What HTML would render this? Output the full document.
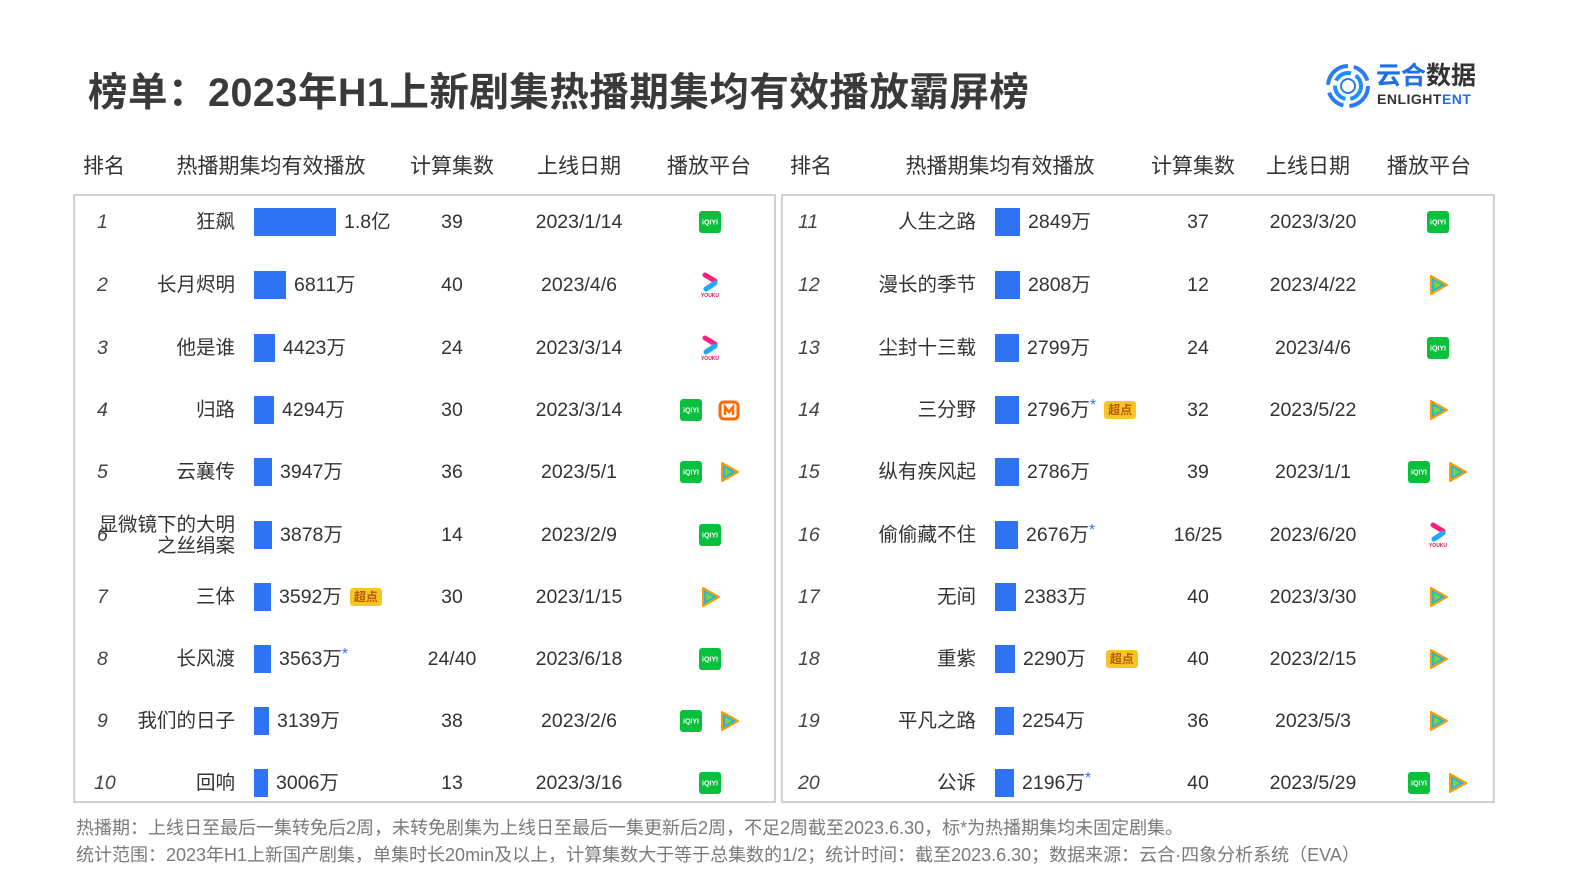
<!DOCTYPE html>
<html><head><meta charset="utf-8"><style>
*{margin:0;padding:0;box-sizing:border-box}
body{width:1587px;height:892px;background:#fff;position:relative;overflow:hidden;font-family:"Liberation Sans","Noto Sans CJK SC",sans-serif;color:#333}
.a{position:absolute;white-space:nowrap}
.title{left:88px;top:61px;font-size:39.5px;font-weight:bold;color:#3a3a3a;letter-spacing:0.5px}
.h{top:150px;font-size:21px;color:#333;text-align:center;width:200px;margin-left:-100px}
.box{border:2px solid #d0d0d0;top:194px;height:609px}
.r{position:absolute;height:30px;left:0;width:1587px}
.r span{position:absolute;top:0;line-height:30px;font-size:19.5px;white-space:nowrap}
.rk{font-style:italic;color:#444}
.nm{text-align:right;width:160px}
.bv{display:flex;align-items:center}
.bv i{display:inline-block;height:28px;background:#2f73f5;margin-right:8px}
.c{text-align:center;width:140px;margin-left:-70px}
.cd{display:inline-block;background:#f7c52a;color:#b35a00;font-size:12px;line-height:18px;padding:0 4px;border-radius:3px;margin-left:8px;font-weight:bold;font-style:normal}
sup{color:#2f73f5;font-size:16px;position:relative;top:-4px}
.pf{display:flex;gap:16px;align-items:center;justify-content:center;width:120px;margin-left:-60px;height:30px}
.ft{left:76px;font-size:18px;color:#7a7a7a}
</style></head><body>
<svg width="0" height="0" style="position:absolute"><defs>
<symbol id="iq" viewBox="0 0 22 22"><rect width="22" height="22" rx="3" fill="#08c03c"/><text x="11" y="13.5" font-size="7" fill="#fff" text-anchor="middle" font-family="Liberation Sans" font-weight="bold">iQIYI</text></symbol>
<symbol id="tx" viewBox="0 0 22 22"><path d="M4 2 L20 11 L4 20 Z" fill="#ff9a00" stroke="#ff9a00" stroke-width="2" stroke-linejoin="round"/><path d="M5 4 L18 11 L5 18 Z" fill="#1fb7ea"/><path d="M7 7 L14 11 L7 15 Z" fill="#7ad63a"/></symbol>
<symbol id="yk" viewBox="0 0 22 26"><path d="M6 3 L16 9" stroke="#ff1f7a" stroke-width="5" stroke-linecap="round"/><path d="M16 11 L7 17" stroke="#21a9f5" stroke-width="5" stroke-linecap="round"/><text x="11" y="25" font-size="5" fill="#e0105a" text-anchor="middle" font-family="Liberation Sans" font-weight="bold">YOUKU</text></symbol>
<symbol id="mg" viewBox="0 0 22 22"><rect x="2" y="3" width="18" height="17" rx="4" fill="none" stroke="#ff6a00" stroke-width="3"/><path d="M7 16 V8 L11 13 L15 8 V16" fill="none" stroke="#ff6a00" stroke-width="2.5"/></symbol>
</defs></svg>

<div class="a title">榜单：2023年H1上新剧集热播期集均有效播放霸屏榜</div>

<div class="a" style="left:1324px;top:62px;">
<svg width="48" height="48" viewBox="0 0 48 48"><circle cx="24" cy="24" r="20" fill="none" stroke="#2a7bf0" stroke-width="4" stroke-dasharray="30 6 20 8"/><circle cx="24" cy="24" r="13" fill="none" stroke="#1d8fff" stroke-width="4" stroke-dasharray="18 5"/><circle cx="24" cy="24" r="7" fill="none" stroke="#2a7bf0" stroke-width="2"/></svg>
</div>
<div class="a" style="left:1376px;top:62px;font-size:25px;font-weight:bold;color:#1f6fe8;line-height:28px">云合<span style="color:#333">数据</span></div>
<div class="a" style="left:1377px;top:91px;font-size:14px;font-weight:bold;color:#333;letter-spacing:0.5px">ENLIGH<span>T</span><span style="color:#1f6fe8">ENT</span></div>

<div class="a h" style="left:104px">排名</div>
<div class="a h" style="left:271px">热播期集均有效播放</div>
<div class="a h" style="left:452px">计算集数</div>
<div class="a h" style="left:579px">上线日期</div>
<div class="a h" style="left:709px">播放平台</div>
<div class="a h" style="left:811px">排名</div>
<div class="a h" style="left:1000px">热播期集均有效播放</div>
<div class="a h" style="left:1193px">计算集数</div>
<div class="a h" style="left:1308px">上线日期</div>
<div class="a h" style="left:1429px">播放平台</div>

<div class="a box" style="left:73px;width:703px"></div>
<div class="a box" style="left:781px;width:714px"></div>

<!-- left rows -->
<div class="r" style="top:207px"><span class="rk" style="left:97px">1</span><span class="nm" style="left:75px">狂飙</span><span class="bv" style="left:254px"><i style="width:82px"></i>1.8亿</span><span class="c" style="left:452px">39</span><span class="c" style="left:579px">2023/1/14</span><span class="pf" style="left:710px"><svg width="22" height="22"><use href="#iq"/></svg></span></div>
<div class="r" style="top:270px"><span class="rk" style="left:97px">2</span><span class="nm" style="left:75px">长月烬明</span><span class="bv" style="left:254px"><i style="width:32px"></i>6811万</span><span class="c" style="left:452px">40</span><span class="c" style="left:579px">2023/4/6</span><span class="pf" style="left:710px"><svg width="22" height="26"><use href="#yk"/></svg></span></div>
<div class="r" style="top:333px"><span class="rk" style="left:97px">3</span><span class="nm" style="left:75px">他是谁</span><span class="bv" style="left:254px"><i style="width:21px"></i>4423万</span><span class="c" style="left:452px">24</span><span class="c" style="left:579px">2023/3/14</span><span class="pf" style="left:710px"><svg width="22" height="26"><use href="#yk"/></svg></span></div>
<div class="r" style="top:395px"><span class="rk" style="left:97px">4</span><span class="nm" style="left:75px">归路</span><span class="bv" style="left:254px"><i style="width:20px"></i>4294万</span><span class="c" style="left:452px">30</span><span class="c" style="left:579px">2023/3/14</span><span class="pf" style="left:710px"><svg width="22" height="22"><use href="#iq"/></svg><svg width="22" height="22"><use href="#mg"/></svg></span></div>
<div class="r" style="top:457px"><span class="rk" style="left:97px">5</span><span class="nm" style="left:75px">云襄传</span><span class="bv" style="left:254px"><i style="width:18px"></i>3947万</span><span class="c" style="left:452px">36</span><span class="c" style="left:579px">2023/5/1</span><span class="pf" style="left:710px"><svg width="22" height="22"><use href="#iq"/></svg><svg width="22" height="22"><use href="#tx"/></svg></span></div>
<div class="r" style="top:520px"><span class="rk" style="left:97px">6</span><span class="nm" style="left:75px;line-height:21px;top:-5px">显微镜下的大明<br>之丝绢案</span><span class="bv" style="left:254px"><i style="width:18px"></i>3878万</span><span class="c" style="left:452px">14</span><span class="c" style="left:579px">2023/2/9</span><span class="pf" style="left:710px"><svg width="22" height="22"><use href="#iq"/></svg></span></div>
<div class="r" style="top:582px"><span class="rk" style="left:97px">7</span><span class="nm" style="left:75px">三体</span><span class="bv" style="left:254px"><i style="width:17px"></i>3592万<b class="cd">超点</b></span><span class="c" style="left:452px">30</span><span class="c" style="left:579px">2023/1/15</span><span class="pf" style="left:710px"><svg width="22" height="22"><use href="#tx"/></svg></span></div>
<div class="r" style="top:644px"><span class="rk" style="left:97px">8</span><span class="nm" style="left:75px">长风渡</span><span class="bv" style="left:254px"><i style="width:17px"></i>3563万<sup>*</sup></span><span class="c" style="left:452px">24/40</span><span class="c" style="left:579px">2023/6/18</span><span class="pf" style="left:710px"><svg width="22" height="22"><use href="#iq"/></svg></span></div>
<div class="r" style="top:706px"><span class="rk" style="left:97px">9</span><span class="nm" style="left:75px">我们的日子</span><span class="bv" style="left:254px"><i style="width:15px"></i>3139万</span><span class="c" style="left:452px">38</span><span class="c" style="left:579px">2023/2/6</span><span class="pf" style="left:710px"><svg width="22" height="22"><use href="#iq"/></svg><svg width="22" height="22"><use href="#tx"/></svg></span></div>
<div class="r" style="top:768px"><span class="rk" style="left:94px">10</span><span class="nm" style="left:75px">回响</span><span class="bv" style="left:254px"><i style="width:14px"></i>3006万</span><span class="c" style="left:452px">13</span><span class="c" style="left:579px">2023/3/16</span><span class="pf" style="left:710px"><svg width="22" height="22"><use href="#iq"/></svg></span></div>

<!-- right rows -->
<div class="r" style="top:207px"><span class="rk" style="left:798px">11</span><span class="nm" style="left:816px">人生之路</span><span class="bv" style="left:995px"><i style="width:25px"></i>2849万</span><span class="c" style="left:1198px">37</span><span class="c" style="left:1313px">2023/3/20</span><span class="pf" style="left:1438px"><svg width="22" height="22"><use href="#iq"/></svg></span></div>
<div class="r" style="top:270px"><span class="rk" style="left:798px">12</span><span class="nm" style="left:816px">漫长的季节</span><span class="bv" style="left:995px"><i style="width:25px"></i>2808万</span><span class="c" style="left:1198px">12</span><span class="c" style="left:1313px">2023/4/22</span><span class="pf" style="left:1438px"><svg width="22" height="22"><use href="#tx"/></svg></span></div>
<div class="r" style="top:333px"><span class="rk" style="left:798px">13</span><span class="nm" style="left:816px">尘封十三载</span><span class="bv" style="left:995px"><i style="width:24px"></i>2799万</span><span class="c" style="left:1198px">24</span><span class="c" style="left:1313px">2023/4/6</span><span class="pf" style="left:1438px"><svg width="22" height="22"><use href="#iq"/></svg></span></div>
<div class="r" style="top:395px"><span class="rk" style="left:798px">14</span><span class="nm" style="left:816px">三分野</span><span class="bv" style="left:995px"><i style="width:24px"></i>2796万<sup>*</sup><b class="cd">超点</b></span><span class="c" style="left:1198px">32</span><span class="c" style="left:1313px">2023/5/22</span><span class="pf" style="left:1438px"><svg width="22" height="22"><use href="#tx"/></svg></span></div>
<div class="r" style="top:457px"><span class="rk" style="left:798px">15</span><span class="nm" style="left:816px">纵有疾风起</span><span class="bv" style="left:995px"><i style="width:24px"></i>2786万</span><span class="c" style="left:1198px">39</span><span class="c" style="left:1313px">2023/1/1</span><span class="pf" style="left:1438px"><svg width="22" height="22"><use href="#iq"/></svg><svg width="22" height="22"><use href="#tx"/></svg></span></div>
<div class="r" style="top:520px"><span class="rk" style="left:798px">16</span><span class="nm" style="left:816px">偷偷藏不住</span><span class="bv" style="left:995px"><i style="width:23px"></i>2676万<sup>*</sup></span><span class="c" style="left:1198px">16/25</span><span class="c" style="left:1313px">2023/6/20</span><span class="pf" style="left:1438px"><svg width="22" height="26"><use href="#yk"/></svg></span></div>
<div class="r" style="top:582px"><span class="rk" style="left:798px">17</span><span class="nm" style="left:816px">无间</span><span class="bv" style="left:995px"><i style="width:21px"></i>2383万</span><span class="c" style="left:1198px">40</span><span class="c" style="left:1313px">2023/3/30</span><span class="pf" style="left:1438px"><svg width="22" height="22"><use href="#tx"/></svg></span></div>
<div class="r" style="top:644px"><span class="rk" style="left:798px">18</span><span class="nm" style="left:816px">重紫</span><span class="bv" style="left:995px"><i style="width:20px"></i>2290万<b class="cd" style="margin-left:20px">超点</b></span><span class="c" style="left:1198px">40</span><span class="c" style="left:1313px">2023/2/15</span><span class="pf" style="left:1438px"><svg width="22" height="22"><use href="#tx"/></svg></span></div>
<div class="r" style="top:706px"><span class="rk" style="left:798px">19</span><span class="nm" style="left:816px">平凡之路</span><span class="bv" style="left:995px"><i style="width:19px"></i>2254万</span><span class="c" style="left:1198px">36</span><span class="c" style="left:1313px">2023/5/3</span><span class="pf" style="left:1438px"><svg width="22" height="22"><use href="#tx"/></svg></span></div>
<div class="r" style="top:768px"><span class="rk" style="left:798px">20</span><span class="nm" style="left:816px">公诉</span><span class="bv" style="left:995px"><i style="width:19px"></i>2196万<sup>*</sup></span><span class="c" style="left:1198px">40</span><span class="c" style="left:1313px">2023/5/29</span><span class="pf" style="left:1438px"><svg width="22" height="22"><use href="#iq"/></svg><svg width="22" height="22"><use href="#tx"/></svg></span></div>

<div class="a ft" style="top:814px">热播期：上线日至最后一集转免后2周，未转免剧集为上线日至最后一集更新后2周，不足2周截至2023.6.30，标*为热播期集均未固定剧集。</div>
<div class="a ft" style="top:841px">统计范围：2023年H1上新国产剧集，单集时长20min及以上，计算集数大于等于总集数的1/2；统计时间：截至2023.6.30；数据来源：云合·四象分析系统（EVA）</div>
</body></html>
